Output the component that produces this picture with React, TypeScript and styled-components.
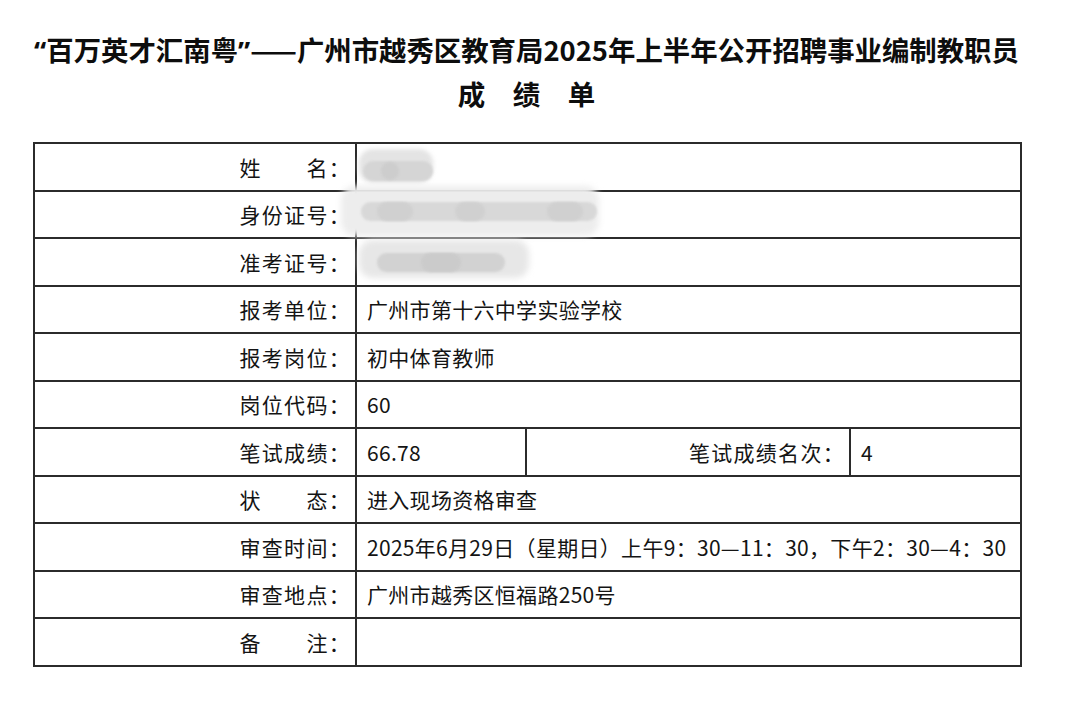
import React from "react";
import styled, { createGlobalStyle } from "styled-components";

const Global = createGlobalStyle`
  html, body { margin: 0; padding: 0; background: #ffffff; }
  body { font-family: "Noto Sans CJK SC", "Noto Sans", sans-serif; color: #111; }
`;

const Page = styled.main`
  width: 987px;
  padding: 29px 0 0 33px;
`;

const Title = styled.h1`
  margin: 0;
  font-size: 27.4px;
  line-height: 40px;
  font-weight: 700;
  text-align: center;
  white-space: nowrap;
  color: #0d0d0d;
`;

const Quote = styled.span`
  font-family: "Noto Sans", "Liberation Sans", sans-serif;
`;

const Dash = styled.span`
  letter-spacing: -3px;
  margin-right: 3px;
`;

const SubTitle = styled.h2`
  margin: 2px 0 0 0;
  font-size: 27.5px;
  line-height: 40px;
  font-weight: 700;
  text-align: center;
  color: #0d0d0d;
`;

const Sheet = styled.table`
  margin-top: 29px;
  width: 987px;
  table-layout: fixed;
  border-collapse: collapse;
  font-size: 21px;
`;

const Row = styled.tr`
  height: 47.5px;
`;

const Label = styled.td`
  border: 2px solid #2b2b2b;
  text-align: right;
  padding: 0 4px 0 0;
  letter-spacing: 1.3px;
  white-space: nowrap;
  color: #141414;
`;

const Value = styled.td`
  border: 2px solid #2b2b2b;
  text-align: left;
  padding: 0 0 0 10px;
  letter-spacing: 0.3px;
  white-space: nowrap;
  color: #141414;
  position: relative;
`;

const Blob = styled.span<{ $x: number; $y: number; $w: number; $h: number; $tone: string; $blur: number }>`
  position: absolute;
  left: ${(p) => p.$x}px;
  top: ${(p) => p.$y}px;
  width: ${(p) => p.$w}px;
  height: ${(p) => p.$h}px;
  background: ${(p) => p.$tone};
  border-radius: ${(p) => Math.min(p.$h / 2, 14)}px;
  filter: blur(${(p) => p.$blur}px);
`;

type BlobSpec = { x: number; y: number; w: number; h: number; tone: string; blur: number };

const Redacted: React.FC<{ blobs: BlobSpec[] }> = ({ blobs }) => (
  <>
    {blobs.map((b, i) => (
      <Blob key={i} $x={b.x} $y={b.y} $w={b.w} $h={b.h} $tone={b.tone} $blur={b.blur} />
    ))}
  </>
);

const nameBlobs: BlobSpec[] = [
  { x: 2, y: 5, w: 74, h: 34, tone: "#e4e4e4", blur: 2 },
  { x: 6, y: 17, w: 70, h: 20, tone: "#d5d5d5", blur: 1 },
  { x: 24, y: 18, w: 18, h: 18, tone: "#cdcdcd", blur: 1 },
];
const idBlobs: BlobSpec[] = [
  { x: -16, y: -6, w: 258, h: 50, tone: "#ededed", blur: 3 },
  { x: 4, y: 10, w: 236, h: 19, tone: "#d8d8d8", blur: 1 },
  { x: 20, y: 10, w: 36, h: 19, tone: "#d0d0d0", blur: 1 },
  { x: 98, y: 10, w: 30, h: 19, tone: "#d0d0d0", blur: 1 },
  { x: 190, y: 10, w: 36, h: 19, tone: "#d0d0d0", blur: 1 },
];
const ticketBlobs: BlobSpec[] = [
  { x: 2, y: 1, w: 170, h: 38, tone: "#e7e7e7", blur: 3 },
  { x: 20, y: 14, w: 128, h: 19, tone: "#d2d2d2", blur: 1 },
  { x: 64, y: 14, w: 40, h: 19, tone: "#cbcbcb", blur: 1 },
];

export default function App() {
  return (
    <>
      <Global />
      <Page>
        <Title>
          <Quote>“</Quote>百万英才汇南粤<Quote>”</Quote>
          <Dash>——</Dash>广州市越秀区教育局2025年上半年公开招聘事业编制教职员
        </Title>
        <SubTitle>成　绩　单</SubTitle>
        <Sheet>
          <colgroup>
            <col style={{ width: 322 }} />
            <col style={{ width: 170 }} />
            <col style={{ width: 324 }} />
            <col style={{ width: 171 }} />
          </colgroup>
          <tbody>
            <Row>
              <Label>姓　　名：</Label>
              <Value colSpan={3}>
                <Redacted blobs={nameBlobs} />
              </Value>
            </Row>
            <Row>
              <Label>身份证号：</Label>
              <Value colSpan={3}>
                <Redacted blobs={idBlobs} />
              </Value>
            </Row>
            <Row>
              <Label>准考证号：</Label>
              <Value colSpan={3}>
                <Redacted blobs={ticketBlobs} />
              </Value>
            </Row>
            <Row>
              <Label>报考单位：</Label>
              <Value colSpan={3}>广州市第十六中学实验学校</Value>
            </Row>
            <Row>
              <Label>报考岗位：</Label>
              <Value colSpan={3}>初中体育教师</Value>
            </Row>
            <Row>
              <Label>岗位代码：</Label>
              <Value colSpan={3}>60</Value>
            </Row>
            <Row>
              <Label>笔试成绩：</Label>
              <Value>66.78</Value>
              <Label>笔试成绩名次：</Label>
              <Value>4</Value>
            </Row>
            <Row>
              <Label>状　　态：</Label>
              <Value colSpan={3}>进入现场资格审查</Value>
            </Row>
            <Row>
              <Label>审查时间：</Label>
              <Value colSpan={3}>2025年6月29日（星期日）上午9：30—11：30，下午2：30—4：30</Value>
            </Row>
            <Row>
              <Label>审查地点：</Label>
              <Value colSpan={3}>广州市越秀区恒福路250号</Value>
            </Row>
            <Row>
              <Label>备　　注：</Label>
              <Value colSpan={3}></Value>
            </Row>
          </tbody>
        </Sheet>
      </Page>
    </>
  );
}
